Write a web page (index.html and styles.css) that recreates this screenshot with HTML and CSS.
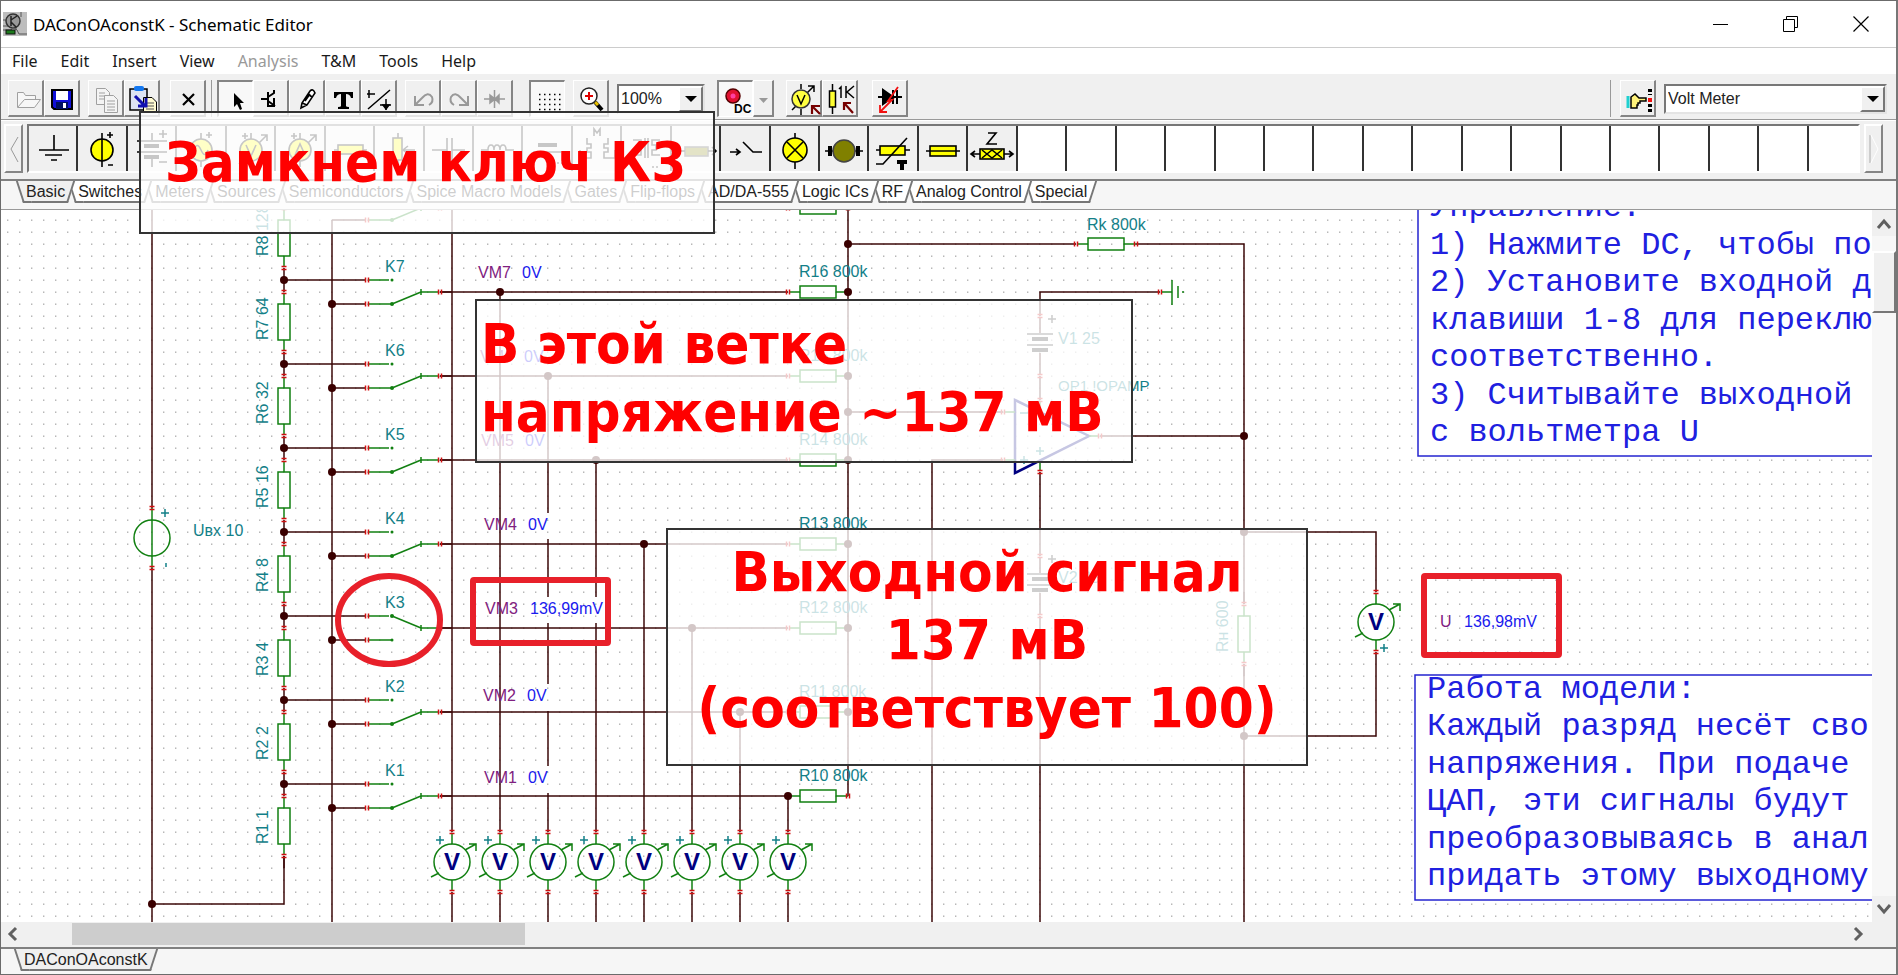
FILE: index.html
```html
<!DOCTYPE html>
<html lang="ru">
<head>
<meta charset="utf-8">
<title>DAConOAconstK - Schematic Editor</title>
<link rel="stylesheet" href="styles.css">
</head>
<body>
<div class="app">
  <header class="titlebar">
    <svg class="app-icon" width="24" height="24" viewBox="0 0 24 24">
      <rect width="24" height="24" fill="#bdbdbd"/>
      <path d="M0 8H5M0 14H6M13 2V7M13 12V18M18 0V5" stroke="#555" fill="none"/>
      <circle cx="10" cy="9" r="7" fill="#999" stroke="#333" stroke-width="1.5"/>
      <path d="M8 4V14M8 8L14 4M8 10L13 15" stroke="#222" stroke-width="1.5" fill="none"/>
      <path d="M0 18H8L10 15L14 18L16 22H24" stroke="#555" fill="none"/>
      <rect x="3" y="18" width="9" height="4" fill="#1c7a1c" stroke="#111"/>
    </svg>
    <span class="title">DAConOAconstK - Schematic Editor</span>
    <div class="window-buttons">
      <button class="win-btn" aria-label="Minimize"><svg width="16" height="16"><path d="M0 8.500H15" stroke="#000"/></svg></button>
      <button class="win-btn" aria-label="Restore"><svg width="16" height="16" fill="none" stroke="#000"><path d="M.5 3.500H11.500V15.500H.5ZM3.500 3.500V.5H14.500V11.500H11.500"/></svg></button>
      <button class="win-btn" aria-label="Close"><svg width="16" height="16"><path d="M.5 .5L15.500 15.500M15.500 .5L.5 15.500" stroke="#000" stroke-width="1.200"/></svg></button>
    </div>
  </header>

  <nav class="menu">
    <button>File</button><button>Edit</button><button>Insert</button><button>View</button><button disabled>Analysis</button><button>T&amp;M</button><button>Tools</button><button>Help</button>
  </nav>

  <div class="toolbar">
    <div class="group">
      <button class="tool" aria-label="Open"><svg width="34" height="34" fill="#f7f7f7" stroke="#a0a0a0"><path d="M8.500 26V11.500H14.500L16.500 14.500H26.500V18"/><path d="M8.500 26.500L15.500 18.500H31.500L25.500 26.500Z"/></svg></button>
      <button class="tool" aria-label="Save"><svg width="34" height="34"><path d="M7 9H27V28H9L7 26Z" fill="#1010d8" stroke="#000" stroke-width="2"/><rect x="11" y="10" width="12" height="9" fill="#fff"/><rect x="11" y="21" width="12" height="7" fill="#001060"/><rect x="18" y="22" width="3" height="5" fill="#fff"/></svg></button>
    </div>
    <div class="group">
      <button class="tool" aria-label="Copy"><svg width="34" height="34" fill="#f4f4f4" stroke="#a0a0a0"><path d="M7.500 7.500H16.500L20.500 11.500V23.500H7.500ZM10 12H16M10 15H16M10 18H16"/><path d="M15.500 14.500H24.500L28.500 18.500V31.500H15.500ZM18 20H26M18 23H26M18 26H26M18 29H26"/></svg></button>
      <button class="tool" aria-label="Paste"><svg width="34" height="34"><path d="M5 8H22V29H5Z" fill="#dde4f4" stroke="#000" stroke-width="1.500"/><rect x="9" y="5" width="10" height="5" rx="2" fill="#1478f0"/><path d="M18.500 16.500H27L31.500 21V31.500H18.500Z" fill="#fffbd0" stroke="#000"/><path d="M21 22H29M21 25H29M21 28H29" stroke="#555"/><path d="M10 15L20 25M21 17V25H13" fill="none" stroke="#1010b0" stroke-width="3"/></svg></button>
    </div>
    <div class="group group-close">
      <button class="tool" aria-label="Delete"><svg width="34" height="34"><path d="M12 13L23 24M23 13L12 24" stroke="#000" stroke-width="2.200"/></svg></button>
    </div>
    <div class="group group-line">
      <button class="tool pressed" aria-label="Select"><svg width="34" height="34"><path d="M15 11V25L18 22L21 28L23 27L21 21H25Z" fill="#000"/></svg></button>
      <button class="tool" aria-label="Wire node"><svg width="34" height="34" fill="none" stroke="#000" stroke-width="2"><path d="M7 18H14M14 11V25M14 16L20 12V9M14 20L21 25M20 17V25H13"/></svg></button>
      <button class="tool" aria-label="Draw"><svg width="34" height="34"><path d="M11 27L12 22L20 10Q23 7 25 12L17 24ZM12 22L17 24M18 13L22 16M15 20L20 13" fill="#fff" stroke="#000" stroke-width="1.600"/></svg></button>
      <button class="tool" aria-label="Text"><svg width="34" height="34"><path d="M8 11H27V17H25Q24 13 20 13V25Q20 26 23 26V28H12V26Q15 26 15 25V13Q11 13 10 17H8Z" fill="#000"/></svg></button>
      <button class="tool" aria-label="Line style"><svg width="34" height="34" fill="none" stroke="#000" stroke-width="1.500"><path d="M5 13H13M7 9V17M6 28L28 9M18 24H29M24 18V29"/><path d="M21 24H27L24 28Z" fill="#000"/></svg></button>
    </div>
    <div class="group">
      <button class="tool" aria-label="Undo" disabled><svg width="34" height="34" fill="none" stroke="#999" stroke-width="2"><path d="M10 23L16 17Q22 10 26 16Q28 21 23 24M9 15V24H18"/></svg></button>
      <button class="tool" aria-label="Redo" disabled><svg width="34" height="34" fill="none" stroke="#999" stroke-width="2"><path d="M25 23L19 17Q13 10 9 16Q7 21 12 24M26 15V24H17"/></svg></button>
      <button class="tool" aria-label="Junction" disabled><svg width="34" height="34" fill="#999" stroke="#999" stroke-width="1.500"><path d="M6 18H27M16.500 9V27M12 14L17 18L12 22ZM21 14L17 18L21 22Z"/></svg></button>
    </div>
    <div class="group group-grid">
      <button class="tool pressed" aria-label="Grid"><svg width="34" height="34"><path d="M8 12.500H30M8 17.500H30M8 22.500H30M8 27.500H30" stroke="#000" stroke-width="1.500" stroke-dasharray="1.500 3.500"/></svg></button>
    </div>
    <div class="group">
      <button class="tool" aria-label="Zoom"><svg width="34" height="34"><path d="M21 21L28 29" stroke="#000" stroke-width="4"/><path d="M21 21L24 24" stroke="#e8c000" stroke-width="3"/><circle cx="15" cy="15" r="8" fill="#fff" stroke="#222" stroke-width="1.500"/><path d="M15 11V19M11 15H19" stroke="#e00000" stroke-width="2"/></svg></button>
    </div>
    <div class="combo combo-zoom">
      <select aria-label="Zoom level"><option>100%</option></select>
      <span class="combo-arrow"></span>
    </div>
    <div class="group group-dc">
      <button class="tool pressed" aria-label="DC mode"><svg width="34" height="34"><circle cx="14" cy="14" r="7" fill="#e01030" stroke="#500" stroke-width="1.500"/><circle cx="14" cy="14" r="2.500" fill="#ff40a0"/><text class="dc-text" x="15" y="31">DC</text></svg></button>
      <button class="tool tool-drop" aria-label="DC options" disabled><svg width="18" height="34"><path d="M5 17H14L9.500 22Z" fill="#999"/></svg></button>
    </div>
    <div class="group">
      <button class="tool" aria-label="Probe"><svg width="34" height="34"><path d="M14 3V8M14 28V34M5 29L9 25M20 12L27 5M21 5H27V11" stroke="#000" stroke-width="1.500" fill="none"/><circle cx="14" cy="18" r="9" fill="#ffff40" stroke="#333" stroke-width="1.500"/><path d="M10 14L14 23L18 14" fill="none" stroke="#000" stroke-width="1.500"/><path d="M33 33L26 26M25 33V25H33" stroke="#700" stroke-width="2.200" fill="none"/></svg></button>
      <button class="tool" aria-label="Set value"><svg width="34" height="34"><path d="M9.500 3V10M9.500 26V33" stroke="#000" stroke-width="1.500"/><rect x="6.500" y="10" width="6" height="16" fill="#ffff30" stroke="#000" stroke-width="1.500"/><path d="M16 8L18 6V17M23 5V17M31 5L24 11L31 17" stroke="#000" stroke-width="1.500" fill="none"/><path d="M30 32L22 23M21 29V22H28" stroke="#700" stroke-width="2.200" fill="none"/></svg></button>
    </div>
    <div class="group group-diode">
      <button class="tool" aria-label="Interactive mode"><svg width="34" height="34"><path d="M5 16H29M10 9V23L20 16ZM20 9V23M24 9V23" fill="#000" stroke="#000" stroke-width="2"/><path d="M25 6L15 20L19 19L7 31M7 24V31H14" fill="none" stroke="#f01010" stroke-width="1.800"/></svg></button>
    </div>
    <div class="group group-right">
      <button class="tool" aria-label="Find component"><svg width="34" height="34"><path d="M7 15V27" stroke="#20d0d0" stroke-width="3"/><path d="M10 16L14 13L18 17H25V20H19V22H17V24H16V27H10Z" fill="#fff27a" stroke="#000" stroke-width="1.500"/><path d="M29 8V14M29 23V31" stroke="#000" stroke-width="4" stroke-dasharray="3 2"/><rect x="27" y="17" width="4" height="4" fill="#f01010"/></svg></button>
      <div class="combo combo-meter">
        <select aria-label="Instrument"><option>Volt Meter</option></select>
        <span class="combo-arrow"></span>
      </div>
    </div>
  </div>

  <div class="palette">
    <button class="pal-scroll" aria-label="Scroll left"><svg width="14" height="40"><path d="M11 8L4 20L11 33" fill="none" stroke="#999"/></svg></button>
    <div class="cells">
      <button class="cell" aria-label="Ground"><svg class="part"><path d="M25 9V24M10 24H40M16 29H33M22 34H28"/></svg></button>
      <button class="cell" aria-label="Voltage source"><svg class="part"><circle cx="24" cy="24" r="11"/><path d="M24 7V41M32 6V12M29 9H35M30 39H35"/></svg></button>
      <button class="cell" aria-label="Battery"><svg class="part"><path d="M24 7V14M9 15H39M9 26H39M24 33V41M35 4V12M31 8H39M31 36H39"/><path class="thick" d="M16 20H31M16 31H31"/></svg></button>
      <button class="cell" aria-label="Voltage generator"><svg class="part"><path d="M24 7V41M32 6V12M29 9H35"/><circle cx="24" cy="24" r="11"/><path d="M17 24Q20 15 24 24T31 24"/></svg></button>
      <button class="cell" aria-label="Voltmeter"><svg class="part"><path d="M24 7V41M12 38L17 33M32 17L40 9M34 9H40V15M15 10H21M18 7V13"/><circle cx="24" cy="24" r="11"/><path d="M19 19L24 30L29 19"/></svg></button>
      <button class="cell" aria-label="Ammeter"><svg class="part"><path d="M24 7V41M32 17L40 9M34 9H40V15M15 10H21M18 7V13"/><circle cx="24" cy="24" r="11"/><path d="M19 29L24 18L29 29M21 26H27"/></svg></button>
      <button class="cell" aria-label="Resistor"><svg class="part"><path d="M8 24H41"/><rect x="12" y="19" width="25" height="9"/></svg></button>
      <button class="cell" aria-label="Potentiometer"><svg class="part"><path d="M23 7V41M28 24H40M33 20L28 24L33 28"/><rect x="18" y="12" width="9" height="22"/></svg></button>
      <button class="cell" aria-label="Capacitor"><svg class="part"><path d="M7 24H22M27 24H40M22 12V35M27 12V35"/></svg></button>
      <button class="cell" aria-label="Inductor"><svg class="part"><path d="M7 24H14Q14 19 17 19T20 24Q20 19 23 19T26 24Q26 19 29 19T32 24H40"/></svg></button>
      <button class="cell" aria-label="Coupled inductor"><svg class="part"><path class="thick" d="M15 19H34"/><path d="M10 26H38M34 37H36M38 37H40"/></svg></button>
      <button class="cell" aria-label="Transformer"><svg class="part"><path d="M7 24V32H18V26H14V22H18V18H14V12M42 24V32H31V26H35V22H31V18H35V12M21 10V3L24 7L27 3V10"/></svg></button>
      <button class="cell" aria-label="Nonlinear transformer"><svg class="part"><path d="M11 14H19V19H15V24H19V29H11M38 14H30V19H34V24H30V29H38M23 12V32M26 12V32M30 41H32M34 41H36"/></svg></button>
      <button class="cell" aria-label="Controlled element"><svg class="part"><rect class="olive" x="13" y="21" width="23" height="9"/><path d="M7 25H13M36 25L43 25M40 21L44 25L40 29"/></svg></button>
      <button class="cell" aria-label="Switch"><svg class="part"><path d="M9 26H19M15 23L19 26L15 29M22 16L32 26H41"/></svg></button>
      <button class="cell" aria-label="Lamp"><svg class="part"><path d="M24 7V43"/><circle cx="24" cy="24" r="12"/><path d="M16 16L32 32M32 16L16 32"/></svg></button>
      <button class="cell" aria-label="Motor"><svg class="part"><path d="M5 25H43"/><path class="thick" d="M10 20V30M38 20V30"/><circle class="olive" cx="24" cy="25" r="11"/></svg></button>
      <button class="cell" aria-label="Thermistor"><svg class="part"><path d="M7 24H41"/><rect x="11" y="20" width="25" height="9"/><path d="M7 38H14L38 12"/><path class="thick" d="M28 36H38M33 36V44"/></svg></button>
      <button class="cell" aria-label="Fuse"><svg class="part"><rect x="11" y="20" width="26" height="10"/><path d="M7 25H41"/></svg></button>
      <button class="cell" aria-label="Impedance"><svg class="part"><path d="M3 28H45M7 25L3 28L7 31M41 25L45 28L41 31M20 7H28L19 18H29"/><rect x="12" y="23" width="24" height="10"/><path d="M14 24L24 32L34 24M14 32L24 24L34 32"/></svg></button>
      <span class="blank"></span><span class="blank"></span><span class="blank"></span><span class="blank"></span><span class="blank"></span><span class="blank"></span><span class="blank"></span><span class="blank"></span><span class="blank"></span><span class="blank"></span><span class="blank"></span><span class="blank"></span><span class="blank"></span><span class="blank"></span><span class="blank"></span><span class="blank"></span><span class="blank"></span>
    </div>
    <button class="pal-scroll" aria-label="Scroll right"><svg width="14" height="40"><path d="M3 6V34" stroke="#aaa"/><path d="M4 6L11 20L4 34" fill="none" stroke="#fff"/></svg></button>
  </div>

  <div class="tabs">
    <button class="tab active">Basic</button><button class="tab">Switches</button><button class="tab">Meters</button><button class="tab">Sources</button><button class="tab">Semiconductors</button><button class="tab">Spice Macro Models</button><button class="tab">Gates</button><button class="tab">Flip-flops</button><button class="tab">AD/DA-555</button><button class="tab">Logic ICs</button><button class="tab">RF</button><button class="tab">Analog Control</button><button class="tab">Special</button>
  </div>

  <main class="workspace">
    <svg class="schematic">
      <defs>
        <pattern id="grid" width="12" height="12" patternUnits="userSpaceOnUse"><rect x="7" y="3.500" width="1.400" height="1.400" fill="#b0b0b0"/></pattern>
        <g id="pin-h"><path class="pin" d="M-1.500 -2.500V2.500M1.500 -2.500V2.500"/></g>
        <g id="pin-v"><path class="pin" d="M-2.500 -1.500H2.500M-2.500 1.500H2.500"/></g>
        <g id="switch-leads">
          <path class="wire" d="M284 0H366M332 24H366M440 12H452"/>
          <path class="green" d="M369 0H389M369 24H391M421 12H438M421 9V15"/>
          <use href="#pin-h" x="367"/><use href="#pin-h" x="367" y="24"/><use href="#pin-h" x="440" y="12"/>
        </g>
        <g id="switch-down"><use href="#switch-leads"/><path class="green" d="M392 24L421 12"/><circle class="tip" cx="392" cy="0" r="1.500"/><circle class="tip" cx="392" cy="24" r="2"/></g>
        <g id="switch-up"><use href="#switch-leads"/><path class="green" d="M392 0L421 12"/><circle class="tip" cx="392" cy="0" r="2"/><circle class="tip" cx="392" cy="24" r="1.500"/></g>
        <g id="res-v">
          <path class="wire" d="M0 -42V-30M0 30V42"/><path class="green" d="M0 -29V-18M0 18V29M-6 -18H6V18H-6Z"/>
          <use href="#pin-v" y="-30"/><use href="#pin-v" y="30"/>
        </g>
        <g id="res-h"><path class="green" d="M-29 0H-18M18 0H30M-18 -6H18V6H-18Z"/><use href="#pin-h" x="-30"/><use href="#pin-h" x="30"/></g>
        <g id="meter">
          <circle class="green" r="18"/><path class="green" d="M0 -29V-18M0 18V29M13 -12L24 -18M17 -18H24V-11M-13 11L-21 15"/>
          <use href="#pin-v" y="-30"/><use href="#pin-v" y="30"/><text class="meter-v" y="8">V</text>
        </g>
        <g id="plus"><path class="teal-line" d="M-4 0H4M0 -4V4"/></g>
        <g id="battery"><path class="wire" d="M0 -29V-13M0 7V29"/><path class="gray" d="M-13 -12H13M-13 -1H13"/><path class="gray bar" d="M-8 -7H8M-8 4H8"/><use href="#pin-v" y="-30"/><use href="#pin-v" y="30"/></g>
      </defs>
      <g transform="translate(-1 -210)">
        <rect y="210" width="100%" height="100%" fill="url(#grid)"/>

        <path class="wire" d="M152 210V508M152 568V922M152 904H284V856M332 922V220M452 210V832M500 292V832M548 376V513M548 539V597M548 623V684M548 711V766M548 793V832M596 460V597M596 623V832M644 544V832M692 628V832M740 712V832M788 796V832M452 892V922M500 892V922M548 892V922M596 892V922M644 892V922M692 892V922M740 892V922M788 892V922"/>
        <path class="wire" d="M440 292H788M440 376H788M440 460H788M440 544H788M440 628H788M440 712H788M440 796H788M848 210V796M848 244H1076M1136 244H1244V604M1244 664V922M848 412H1003M932 922V460H1003M1040 316V292H1160M1040 376V400M1040 472V556M1040 616V922M1100 436H1244M1244 532H1376V592M1376 652V736H1244"/>

        <use href="#switch-down" y="196"/><use href="#switch-down" y="280"/><use href="#switch-down" y="364"/><use href="#switch-down" y="448"/><use href="#switch-down" y="532"/><use href="#switch-up" y="616"/><use href="#switch-down" y="700"/><use href="#switch-down" y="784"/>
        <use href="#res-v" x="284" y="238"/><use href="#res-v" x="284" y="322"/><use href="#res-v" x="284" y="406"/><use href="#res-v" x="284" y="490"/><use href="#res-v" x="284" y="574"/><use href="#res-v" x="284" y="658"/><use href="#res-v" x="284" y="742"/><use href="#res-v" x="284" y="826"/>
        <use href="#res-h" x="818" y="208"/><use href="#res-h" x="818" y="292"/><use href="#res-h" x="818" y="376"/><use href="#res-h" x="818" y="460"/><use href="#res-h" x="818" y="544"/><use href="#res-h" x="818" y="628"/><use href="#res-h" x="818" y="712"/><use href="#res-h" x="818" y="796"/>
        <use href="#res-h" x="1106" y="244"/><use href="#res-v" x="1244" y="634"/>

        <circle class="green" cx="152" cy="538" r="18"/><path class="green" d="M152 508V568"/><use href="#pin-v" x="152" y="508"/><use href="#pin-v" x="152" y="568"/>
        <use href="#plus" x="165" y="513"/><path class="teal-line" d="M166 563V567"/>

        <use href="#meter" x="452" y="862"/><use href="#meter" x="500" y="862"/><use href="#meter" x="548" y="862"/><use href="#meter" x="596" y="862"/><use href="#meter" x="644" y="862"/><use href="#meter" x="692" y="862"/><use href="#meter" x="740" y="862"/><use href="#meter" x="788" y="862"/><use href="#meter" x="1376" y="622"/>
        <use href="#plus" x="440" y="840"/><use href="#plus" x="488" y="840"/><use href="#plus" x="536" y="840"/><use href="#plus" x="584" y="840"/><use href="#plus" x="632" y="840"/><use href="#plus" x="680" y="840"/><use href="#plus" x="728" y="840"/><use href="#plus" x="776" y="840"/><use href="#plus" x="1384" y="648"/>

        <use href="#battery" x="1040" y="346"/><use href="#battery" x="1040" y="586"/>
        <path class="gray" d="M1048 319H1056M1052 315V323M1048 559H1056M1052 555V563"/>
        <use href="#pin-h" x="1160" y="292"/><path class="green" d="M1162 292H1172M1172 280V305M1178 286V298M1183 291V293"/>
        <path class="opamp" d="M1015 400V473L1089 436Z"/>
        <path class="green" d="M1005 412H1015M1005 460H1015M1040 402V412M1040 461V471M1089 436H1098"/>
        <use href="#pin-h" x="1003" y="412"/><use href="#pin-h" x="1003" y="460"/><use href="#pin-v" x="1040" y="400"/><use href="#pin-v" x="1040" y="472"/><use href="#pin-h" x="1100" y="436"/>
        <path class="teal-line" d="M1020 413H1028"/><use href="#plus" x="1024" y="460"/><use href="#plus" x="1040" y="451"/>

        <g class="node">
          <circle cx="152" cy="904" r="4"/>
          <circle cx="284" cy="280" r="4"/><circle cx="284" cy="364" r="4"/><circle cx="284" cy="448" r="4"/><circle cx="284" cy="532" r="4"/><circle cx="284" cy="616" r="4"/><circle cx="284" cy="700" r="4"/><circle cx="284" cy="784" r="4"/>
          <circle cx="332" cy="304" r="4"/><circle cx="332" cy="388" r="4"/><circle cx="332" cy="472" r="4"/><circle cx="332" cy="556" r="4"/><circle cx="332" cy="640" r="4"/><circle cx="332" cy="724" r="4"/><circle cx="332" cy="808" r="4"/>
          <circle cx="500" cy="292" r="4"/><circle cx="548" cy="376" r="4"/><circle cx="596" cy="460" r="4"/><circle cx="644" cy="544" r="4"/><circle cx="692" cy="628" r="4"/><circle cx="740" cy="712" r="4"/><circle cx="788" cy="796" r="4"/>
          <circle cx="848" cy="244" r="4"/><circle cx="848" cy="292" r="4"/><circle cx="848" cy="376" r="4"/><circle cx="848" cy="412" r="4"/><circle cx="848" cy="460" r="4"/><circle cx="848" cy="544" r="4"/><circle cx="848" cy="628" r="4"/><circle cx="848" cy="712" r="4"/>
          <circle cx="1244" cy="436" r="4"/><circle cx="1244" cy="532" r="4"/><circle cx="1244" cy="736" r="4"/>
        </g>

        <g class="label">
          <text x="385" y="272">K7</text><text x="385" y="356">K6</text><text x="385" y="440">K5</text><text x="385" y="524">K4</text><text x="385" y="608">K3</text><text x="385" y="692">K2</text><text x="385" y="776">K1</text>
          <text transform="translate(268 256) rotate(-90)">R8 128</text><text transform="translate(268 340) rotate(-90)">R7 64</text><text transform="translate(268 424) rotate(-90)">R6 32</text><text transform="translate(268 508) rotate(-90)">R5 16</text><text transform="translate(268 592) rotate(-90)">R4 8</text><text transform="translate(268 676) rotate(-90)">R3 4</text><text transform="translate(268 760) rotate(-90)">R2 2</text><text transform="translate(268 844) rotate(-90)">R1 1</text>
          <text x="193" y="536">Uвх 10</text>
          <text x="799" y="277">R16 800k</text><text x="799" y="361">R15 800k</text><text x="799" y="445">R14 800k</text><text x="799" y="529">R13 800k</text><text x="799" y="613">R12 800k</text><text x="799" y="697">R11 800k</text><text x="799" y="781">R10 800k</text>
          <text x="1087" y="230">Rk 800k</text><text x="1058" y="344">V1 25</text><text x="1058" y="583">V2 25</text><text class="opamp-name" x="1058" y="391">OP1 !OPAMP</text>
          <text transform="translate(1228 652) rotate(-90)">Rн 600</text>
        </g>
        <g class="label meter-name">
          <text x="478" y="278">VM7</text><text x="480" y="362">VM6</text><text x="481" y="446">VM5</text><text x="484" y="530">VM4</text><text x="485" y="614">VM3</text><text x="483" y="701">VM2</text><text x="484" y="783">VM1</text><text x="1440" y="627">U</text>
        </g>
        <g class="label meter-value">
          <text x="522" y="278">0V</text><text x="524" y="362">0V</text><text x="525" y="446">0V</text><text x="528" y="530">0V</text><text x="530" y="614">136,99mV</text><text x="527" y="701">0V</text><text x="528" y="783">0V</text><text x="1464" y="627">136,98mV</text>
        </g>

        <rect class="note" x="1418" y="180" width="700" height="276"/>
        <g class="note-text">
          <text x="1430" y="216">Управление:</text><text x="1430" y="254">1) Нажмите DC, чтобы по</text><text x="1430" y="291">2) Установите входной д</text><text x="1430" y="329">клавиши 1-8 для переклю</text><text x="1430" y="366">соответственно.</text><text x="1430" y="404">3) Считывайте выходной</text><text x="1430" y="441">с вольтметра U</text>
        </g>
        <rect class="note" x="1415" y="675" width="700" height="225"/>
        <g class="note-text">
          <text x="1427" y="698">Работа модели:</text><text x="1427" y="735">Каждый разряд несёт сво</text><text x="1427" y="773">напряжения. При подаче</text><text x="1427" y="810">ЦАП, эти сигналы будут</text><text x="1427" y="848">преобразовываясь в анал</text><text x="1427" y="885">придать этому выходному</text>
        </g>

        <g class="marker">
          <ellipse cx="389" cy="620" rx="51" ry="44"/>
          <rect x="473" y="580" width="135" height="63" rx="1"/>
          <rect x="1424" y="576" width="135" height="79" rx="1"/>
        </g>
      </g>
    </svg>
    <div class="vscroll">
      <svg width="24" height="26"><path d="M6 18L12 11L18 18" fill="none" stroke="#606060" stroke-width="3"/></svg>
      <div class="vtrack"><div class="vthumb"></div></div>
      <svg width="24" height="26"><path d="M6 9L12 16L18 9" fill="none" stroke="#606060" stroke-width="3"/></svg>
    </div>
  </main>

  <div class="hscroll">
    <svg width="26" height="24"><path d="M15 6L9 12L15 18" fill="none" stroke="#606060" stroke-width="3"/></svg>
    <div class="htrack"><div class="hthumb"></div></div>
    <svg width="26" height="24"><path d="M7 6L13 12L7 18" fill="none" stroke="#606060" stroke-width="3"/></svg>
  </div>
  <div class="tabs doc-tabs"><button class="tab active">DAConOAconstK</button></div>

  <p class="callout callout-switch">Замкнем ключ К3</p>
  <p class="callout callout-branch">В этой ветке<br>напряжение ~137 мВ</p>
  <p class="callout callout-output">Выходной сигнал<br>137 мВ<br>(соответствует 100)</p>
</div>
</body>
</html>
```
FILE: styles.css
```css
* { box-sizing: border-box; }
body { margin: 0; font-family: "Liberation Sans", Arial, sans-serif; color: #000; }
button { font: inherit; color: inherit; margin: 0; padding: 0; border: 0; background: none; }
svg { display: block; flex: none; }

.app {
  position: relative;
  display: flex;
  flex-direction: column;
  height: 100vh;
  overflow: hidden;
  background: #f0f0f0;
  border: 1px solid #6b6b6b;
  border-right: 2px solid #777;
}

.titlebar {
  display: flex;
  align-items: center;
  height: 47px;
  flex: none;
  padding-left: 2px;
  gap: 6px;
  background: #fff;
  border-bottom: 1px solid #ccc;
}
.title { flex: 1; font-family: "Noto Sans", sans-serif; font-size: 17px; }
.window-buttons { display: flex; }
.win-btn { width: 70px; height: 46px; display: grid; place-items: center; }

.menu {
  display: flex;
  flex: none;
  gap: 23px;
  height: 26px;
  padding-left: 11px;
  background: #fff;
  font-family: "Noto Sans", sans-serif;
  font-size: 16px;
  line-height: 26px;
  color: #1a1a1a;
}
.menu button:disabled { color: #999; }

.toolbar {
  display: flex;
  align-items: center;
  flex: none;
  gap: 10px;
  height: 46px;
  padding: 4px 9px 0 7px;
  border-bottom: 1px solid #999;
}
.group { display: flex; align-items: center; }
.group + .group { margin-left: -2px; }
.toolbar .group-close { margin-left: 0; }
.toolbar .group-line { margin-left: -5px; padding-left: 5px; border-left: 1px solid #999; }
.toolbar .group-grid { margin-left: 6px; }
.combo-zoom { margin-left: -2px; }
.group-dc { margin-left: 2px; margin-right: 4px; }
.toolbar .group-diode { margin-left: 4px; }
.tool {
  width: 36px;
  height: 37px;
  border: 2px solid;
  border-width: 1px 2px 2px 1px;
  border-color: #fff #858585 #858585 #fff;
}
.tool.pressed {
  background: #f8f8f8;
  border-width: 2px 1px 1px 2px;
  border-color: #858585 #fff #fff #858585;
}
.tool-drop { width: 21px; }
.dc-text { font-size: 12px; font-weight: bold; }
.toolbar .group-right {
  margin-left: auto;
  gap: 8px;
  padding-left: 9px;
  border-left: 1px solid #999;
}

.combo {
  position: relative;
  display: flex;
  height: 30px;
  background: #fff;
  border: 2px solid;
  border-color: #777 #e4e4e4 #e4e4e4 #777;
}
.combo-zoom { width: 88px; }
.combo-meter { width: 223px; }
.combo select {
  appearance: none;
  width: 100%;
  padding: 0 26px 0 2px;
  border: 0;
  background: #fff;
  font: 16px "Liberation Sans", Arial, sans-serif;
  color: #222;
}
.combo-arrow {
  position: absolute;
  top: 0;
  right: 0;
  bottom: 0;
  width: 25px;
  display: grid;
  place-items: center;
  background: #f0f0f0;
  border: 2px solid;
  border-color: #fff #777 #777 #fff;
  pointer-events: none;
}
.combo-arrow::after {
  content: "";
  border: 6px solid transparent;
  border-top-color: #000;
  border-bottom: 0;
}

.palette {
  display: flex;
  flex: none;
  gap: 4px;
  height: 59px;
  padding: 3px 13px 6px 3px;
  border-top: 1px solid #fff;
}
.pal-scroll {
  width: 19px;
  display: grid;
  place-items: center;
  border: 2px solid;
  border-color: #fff #858585 #858585 #fff;
}
.cells {
  flex: 1;
  display: flex;
  min-width: 0;
  border: 2px solid;
  border-color: #777 #fff #fff #777;
  background: #fff;
}
.cell, .blank {
  flex: 1 1 0;
  min-width: 0;
  overflow: hidden;
  border-right: 2px solid #333;
}
.cell { background: #f0f0f0; }
.blank:last-child { border-right-color: #fff; }
.part { width: 48px; height: 46px; fill: none; stroke: #000; stroke-width: 1.6; }
.part circle, .part rect { fill: #ff0; }
.part .olive { fill: #808000; stroke: #444; }
.part .thick { stroke-width: 4; }

.tabs {
  display: flex;
  align-items: flex-start;
  flex: none;
  gap: 7px;
  height: 31px;
  padding-left: 22px;
  isolation: isolate;
  background: #f6f6f6;
  border-top: 2px solid #808080;
  border-bottom: 1px solid #999;
  font-size: 16px;
}
.tab {
  position: relative;
  height: 22px;
  padding: 0 3px;
  line-height: 22px;
  white-space: nowrap;
  color: #222;
}
.tab::before, .tab::after {
  content: "";
  position: absolute;
  inset: 0 8px 0 0;
  z-index: -2;
  background: #fff;
  border: 0 solid #777;
  border-width: 0 0 2px 2px;
  transform: skewX(18deg);
  transform-origin: bottom;
}
.tab::after {
  inset: 0 0 0 8px;
  z-index: -1;
  border-width: 0 2px 2px 0;
  transform: skewX(-18deg);
}
.tab.active::before, .tab.active::after { background: #f0f0f0; }

.workspace { flex: 1; display: flex; min-height: 0; background: #fff; }
.schematic {
  flex: 1;
  min-width: 0;
  height: 100%;
  overflow: hidden;
  fill: none;
}
.wire { stroke: #3c0a0a; stroke-width: 1.5; }
.green { stroke: #128012; stroke-width: 1.5; }
.pin { stroke: #d01010; stroke-width: 1.5; }
.tip { fill: #128012; }
.gray { stroke: #202020; stroke-width: 1.5; }
.gray.bar { stroke-width: 4; }
.teal-line { stroke: #138088; stroke-width: 1.5; }
.opamp { stroke: #000080; stroke-width: 2.5; }
.node { fill: #3a0000; }
.meter-v { fill: #000080; font-size: 24px; font-weight: bold; text-anchor: middle; }
.label { fill: #138088; font-size: 16px; }
.label .opamp-name { font-size: 15px; }
.meter-name { fill: #802080; }
.meter-value { fill: #1a1aee; }
.note { fill: #fff; stroke: #2424d0; stroke-width: 1.5; }
.note-text { fill: #2020e0; font-family: "Liberation Mono", monospace; font-size: 32px; }
.marker { stroke: #e8202a; stroke-width: 6; }

.vscroll { display: flex; flex-direction: column; width: 24px; flex: none; background: #f0f0f0; }
.vtrack { flex: 1; padding-top: 15px; background: #f7f7f7; }
.vthumb {
  height: 62px;
  background: #f0f0f0;
  border: 2px solid;
  border-color: #fff #777 #777 #fff;
}
.hscroll { display: flex; flex: none; height: 25px; padding-right: 22px; background: #f0f0f0; }
.htrack { flex: 1; padding: 1px 0 1px 45px; }
.hthumb { width: 25.5%; height: 22px; background: #cdcdcd; }
.doc-tabs { height: 27px; padding-left: 20px; border-bottom: 0; }

.callout {
  position: absolute;
  margin: 0;
  background: rgba(255, 255, 255, .78);
  border: 2px solid #333;
  color: #f00;
  font: bold 56px/68px "DejaVu Sans Condensed", "DejaVu Sans", sans-serif;
  font-stretch: condensed;
  white-space: nowrap;
}
.callout-switch { left: 138px; top: 110px; width: 576px; height: 123px; padding: 15px 0 0 24px; }
.callout-branch { left: 474px; top: 298px; width: 658px; height: 164px; padding: 9px 0 0 4px; }
.callout-output { left: 665px; top: 527px; width: 642px; height: 238px; padding-top: 8px; text-align: center; }
```
